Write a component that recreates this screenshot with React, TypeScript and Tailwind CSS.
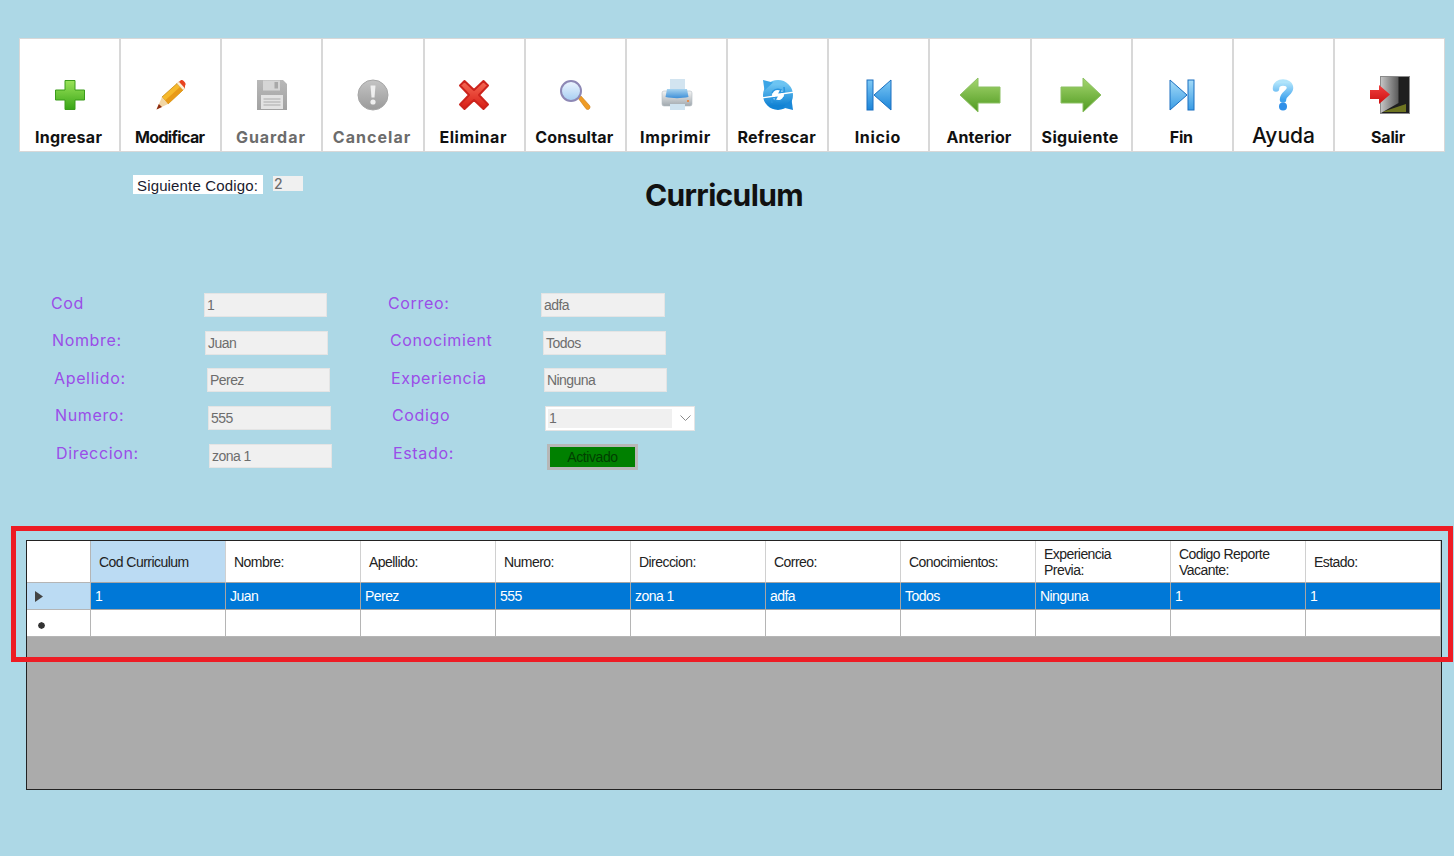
import type { ReactNode } from 'react';

const toolFont = "font-['Inter','Liberation_Sans',sans-serif]";

function Grad({ id, from, to }: { id: string; from: string; to: string }) {
  return (
    <linearGradient id={id} x1="0" y1="0" x2="0" y2="1">
      <stop offset="0" stopColor={from} />
      <stop offset="1" stopColor={to} />
    </linearGradient>
  );
}

const PlusIcon = () => (
  <svg width="32" height="32" viewBox="0 0 32 32">
    <defs><Grad id="gPlus" from="#9be35a" to="#38a516" /></defs>
    <path d="M11 1.500h10v9.500h9.500v10H21v9.500H11V21H1.500V11H11z" fill="url(#gPlus)" stroke="#3b9c1b" strokeWidth="1" strokeLinejoin="round" />
  </svg>
);

const PencilIcon = () => (
  <svg width="32" height="32" viewBox="0 0 32 32">
    <polygon points="7,18 22,4.500 28,11 13,25" fill="#f6b92c" stroke="#c98a12" strokeWidth="0.8" />
    <polygon points="10,21.500 25,8 28,11 13,25" fill="#e89a18" />
    <polygon points="7,18 13,25 1.500,30.500" fill="#f2d6a4" />
    <polygon points="1.500,30.500 3.800,25 7,28" fill="#8e2c10" />
    <polygon points="22,4.500 24,2.700 30,9.200 28,11" fill="#fff2d8" stroke="#d8b070" strokeWidth="0.5" />
    <path d="M24 2.700l1.500-1.200c1-.7 2.300-.5 3.200.5l1.300 1.500c.8 1 .8 2.300 0 3.200L30 9.200z" fill="#e8431f" />
  </svg>
);

const SaveIcon = () => (
  <svg width="32" height="32" viewBox="0 0 32 32">
    <defs><Grad id="gSave" from="#b8b8b8" to="#a2a2a2" /></defs>
    <path d="M1 1h26l4 4v26H1z" fill="url(#gSave)" />
    <rect x="7" y="1.500" width="17" height="10" fill="#d5d5d5" />
    <rect x="18.500" y="3" width="3.500" height="6.500" fill="#a8a8a8" />
    <rect x="5" y="16" width="22" height="14" fill="#e2e2e2" />
    <path d="M7.500 20h17M7.500 23h17M7.500 26h17" stroke="#aaa" strokeWidth="1.200" />
  </svg>
);

const CancelIcon = () => (
  <svg width="32" height="32" viewBox="0 0 32 32">
    <defs><Grad id="gCancel" from="#c4c4c4" to="#9a9a9a" /></defs>
    <circle cx="16" cy="16" r="15" fill="url(#gCancel)" stroke="#a6a6a6" strokeWidth="1" />
    <path d="M13.500 6.500h5l-1 12h-3z" fill="#efefef" />
    <circle cx="16" cy="23" r="2.600" fill="#efefef" />
  </svg>
);

const DeleteIcon = () => (
  <svg width="32" height="32" viewBox="0 0 32 32">
    <defs><Grad id="gDel" from="#f56a55" to="#d81c14" /></defs>
    <polygon points="2,6.500 6.500,2 16,11 25.500,2 30,6.500 21,16 30,25.500 25.500,30 16,21 6.500,30 2,25.500 11,16" fill="url(#gDel)" stroke="#cc231c" strokeWidth="2" strokeLinejoin="round" />
  </svg>
);

const SearchIcon = () => (
  <svg width="32" height="32" viewBox="0 0 32 32">
    <defs><Grad id="gLens" from="#eef6ff" to="#a5cdf2" /></defs>
    <path d="M19 19l3-2 8.500 9.500c.8 1 .7 2.500-.3 3.400-1 .9-2.400.8-3.200-.2z" fill="#ef9b25" stroke="#c97a14" strokeWidth="0.6" />
    <circle cx="12" cy="12" r="10" fill="url(#gLens)" stroke="#8d88b5" strokeWidth="2" />
  </svg>
);

const PrintIcon = () => (
  <svg width="32" height="32" viewBox="0 0 32 32">
    <defs>
      <Grad id="gPrint" from="#f4f4f4" to="#a0a8ae" />
      <Grad id="gTray" from="#a8d4f0" to="#3f90d8" />
    </defs>
    <rect x="9" y="0" width="15" height="12" fill="#d2e4f0" />
    <rect x="1" y="12" width="30" height="15" rx="2" fill="url(#gPrint)" stroke="#b4bcc2" strokeWidth="0.6" />
    <path d="M6 10h20l1.500 8c-7 1.500-16 1.500-23 0z" fill="url(#gTray)" />
    <circle cx="27" cy="22" r="1.100" fill="#f08030" />
    <rect x="9" y="25" width="15" height="6" fill="#cfe3f0" />
  </svg>
);

const RefreshIcon = () => (
  <svg width="32" height="32" viewBox="0 0 32 32">
    <defs><Grad id="gRef" from="#6cc4f2" to="#1283d4" /></defs>
    <circle cx="16" cy="16" r="10.500" fill="#fff" stroke="url(#gRef)" strokeWidth="9" />
    <path d="M1 1l10 2.500-8.500 8z" fill="#3ba5e6" />
    <path d="M31 31l-10-2.500 8.500-8z" fill="#1a88d8" />
    <path d="M10 14c1-3 5-5 9-3l-1.500 2.500 5-.5-.5-5" fill="none" stroke="#2a96e0" strokeWidth="1.500" />
    <path d="M22 18c-1 3-5 5-9 3l1.500-2.500-5 .5.500 5" fill="none" stroke="#2a96e0" strokeWidth="1.500" />
    <path d="M0 18.800l13-1.800M19 15l13-1.800" stroke="#fff" strokeWidth="1.300" />
  </svg>
);

const FirstIcon = () => (
  <svg width="26" height="32" viewBox="0 0 26 32">
    <defs><Grad id="gFirst" from="#7cc8f5" to="#1b84d8" /></defs>
    <rect x="1" y="1" width="6" height="30" fill="url(#gFirst)" stroke="#1a6fc0" strokeWidth="1" />
    <path d="M25 1v30L8 16z" fill="url(#gFirst)" stroke="#1a6fc0" strokeWidth="1" strokeLinejoin="round" />
  </svg>
);

const LastIcon = () => (
  <svg width="26" height="32" viewBox="0 0 26 32">
    <defs><Grad id="gLast" from="#a5dcf8" to="#3a9ce4" /></defs>
    <path d="M1 1v30l17-15z" fill="url(#gLast)" stroke="#1a6fc0" strokeWidth="1" strokeLinejoin="round" />
    <rect x="19" y="1" width="6" height="30" fill="url(#gLast)" stroke="#1a6fc0" strokeWidth="1" />
  </svg>
);

const BackIcon = () => (
  <svg width="42" height="36" viewBox="0 0 42 36">
    <defs><Grad id="gBack" from="#a5d66f" to="#4f9a20" /></defs>
    <path d="M1 18L19 1v9h22v16H19v9z" fill="url(#gBack)" stroke="#8cc063" strokeWidth="1" strokeLinejoin="round" />
  </svg>
);

const NextIcon = () => (
  <svg width="42" height="36" viewBox="0 0 42 36">
    <defs><Grad id="gNext" from="#a5d66f" to="#4f9a20" /></defs>
    <path d="M41 18L23 1v9H1v16h22v9z" fill="url(#gNext)" stroke="#8cc063" strokeWidth="1" strokeLinejoin="round" />
  </svg>
);

const HelpIcon = () => (
  <svg width="22" height="32" viewBox="0 0 22 32">
    <defs><Grad id="gHelp" from="#b0e4fb" to="#3ea2ee" /></defs>
    <path d="M4 9.500C4 5 7.500 3.500 11 3.500s7 2 7 5.500c0 5-7 5.500-7 11.500" fill="none" stroke="url(#gHelp)" strokeWidth="6.500" strokeLinecap="round" />
    <circle cx="11" cy="27.500" r="4" fill="#2f8fe8" />
  </svg>
);

const ExitIcon = () => (
  <svg width="40" height="38" viewBox="0 0 40 38">
    <defs>
      <linearGradient id="gDoor" x1="0" y1="0" x2="1" y2="0">
        <stop offset="0" stopColor="#c4c4c4" />
        <stop offset="1" stopColor="#5a5a5a" />
      </linearGradient>
      <Grad id="gArrow" from="#f04040" to="#cc1010" />
    </defs>
    <rect x="10.500" y="0.500" width="29" height="37" fill="#1e1e1e" stroke="#8a8a8a" strokeWidth="1" />
    <path d="M36 28v8H12z" fill="#6e7420" />
    <path d="M11 1h17.500v26L11 37z" fill="url(#gDoor)" />
    <path d="M0 14h9V9l11 9.500L9 28v-5H0z" fill="url(#gArrow)" />
  </svg>
);

type Tool = { label: string; icon: ReactNode; text: string };

const tools: Tool[] = [
  { label: 'Ingresar', icon: <PlusIcon />, text: 'tracking-[0.3px] text-[#111]' },
  { label: 'Modificar', icon: <PencilIcon />, text: 'tracking-[-0.65px] text-[#111]' },
  { label: 'Guardar', icon: <SaveIcon />, text: 'tracking-[0.95px] text-[#6c6c6c]' },
  { label: 'Cancelar', icon: <CancelIcon />, text: 'tracking-[1.05px] text-[#6c6c6c]' },
  { label: 'Eliminar', icon: <DeleteIcon />, text: 'tracking-[0.55px] text-[#111]' },
  { label: 'Consultar', icon: <SearchIcon />, text: 'tracking-[0.13px] text-[#111]' },
  { label: 'Imprimir', icon: <PrintIcon />, text: 'tracking-[0.68px] text-[#111]' },
  { label: 'Refrescar', icon: <RefreshIcon />, text: 'tracking-[0.25px] text-[#111]' },
  { label: 'Inicio', icon: <FirstIcon />, text: 'tracking-[0.63px] text-[#111]' },
  { label: 'Anterior', icon: <BackIcon />, text: 'tracking-[0.05px] text-[#111]' },
  { label: 'Siguiente', icon: <NextIcon />, text: 'tracking-[0.35px] text-[#111]' },
  { label: 'Fin', icon: <LastIcon />, text: 'tracking-[-0.2px] text-[#111]' },
];

function ToolButton({ label, icon, text }: Tool) {
  return (
    <button className="flex-1 min-w-0 h-full bg-white flex flex-col items-center pt-[36px]">
      <div className="h-[40px] flex items-center justify-center">{icon}</div>
      <div className={`mt-[10px] pr-[2px] h-[24px] leading-[24px] text-[16px] font-bold ${text}`}>{label}</div>
    </button>
  );
}

const boxText = "font-['Liberation_Sans',sans-serif] text-[14px] tracking-[-0.55px] text-[#6d6d6d]";

function Field({ value, width = 'w-[123px]' }: { value: string; width?: string }) {
  return (
    <div className={`${width} h-[24px] bg-[#f0f0f0] border border-[#e4e4e4] pl-[2px] leading-[23px] ${boxText}`}>{value}</div>
  );
}

function Label({ children, className }: { children: string; className: string }) {
  return <div className={`h-[24px] leading-[19px] text-[16px] tracking-[0.65px] text-[#9a4de8] ${className}`}>{children}</div>;
}

const columns = ['Cod Curriculum', 'Nombre:', 'Apellido:', 'Numero:', 'Direccion:', 'Correo:', 'Conocimientos:', 'Experiencia Previa:', 'Codigo Reporte Vacante:', 'Estado:'];
const values = ['1', 'Juan', 'Perez', '555', 'zona 1', 'adfa', 'Todos', 'Ninguna', '1', '1'];

const gridText = "font-['Liberation_Sans',sans-serif] text-[14px] tracking-[-0.55px]";

function DataGrid() {
  return (
    <div className="relative ml-[26px] mt-[70px] w-[1416px] h-[250px] border border-[#222] bg-[#ababab]">
      <div className={`grid grid-cols-[64px_repeat(10,135px)] grid-rows-[42px_27px_27px] ${gridText}`}>
        <div className="bg-white border-r border-b border-[#b5b5b5]" />
        {columns.map((c, i) => (
          <div
            key={c}
            className={`border-r border-b border-[#d0d0d0] border-b-[#a5a5a5] pl-[8px] pr-[20px] pt-px flex items-center leading-[16px] text-[#222] ${i === 0 ? 'bg-[#bbdbf3]' : 'bg-white'}`}
          >
            {c}
          </div>
        ))}
        <div className="bg-[#bbdbf3] border-r border-b border-[#b5b5b5] flex items-center pl-[8px]">
          <svg width="8" height="11" viewBox="0 0 8 11"><path d="M0 0l8 5.500L0 11z" fill="#444" /></svg>
        </div>
        {values.map((v, i) => (
          <div key={i} className="bg-[#0078d7] text-white border-r border-b border-[#a5a5a5] pl-[4px] leading-[26px]">{v}</div>
        ))}
        <div className="bg-white border-r border-b border-[#b5b5b5] flex items-center pl-[11px] pt-[4px]">
          <svg width="7" height="7" viewBox="0 0 8 8"><polygon points="4,0 7,1.500 8,4 7,6.500 4,8 1,6.500 0,4 1,1.500" fill="#333" /></svg>
        </div>
        {values.map((_, i) => (
          <div key={i} className="bg-white border-r border-b border-[#b5b5b5]" />
        ))}
      </div>
      {/* red highlight drawn over the screenshot */}
      <div className="absolute left-[-16px] top-[-15px] w-[1442px] h-[136px] border-[5px] border-[#ed1c24] pointer-events-none" />
    </div>
  );
}

export default function App() {
  return (
    <div className={`min-h-screen bg-[#add8e6] pt-[38px] overflow-hidden ${toolFont}`}>
      {/* toolbar */}
      <div className="ml-[19px] w-[1426px] h-[114px] bg-[#d8d8d8] p-px flex gap-[2px]">
        {tools.map((t) => (
          <ToolButton key={t.label} {...t} />
        ))}
        <button className="flex-1 min-w-0 h-full bg-white flex flex-col items-center pt-[36px]">
          <div className="h-[40px] flex items-center justify-center"><HelpIcon /></div>
          <div className="mt-[8px] h-[26px] leading-[26px] text-[21px] font-medium text-[#111]">Ayuda</div>
        </button>
        <button className="w-[109px] h-full bg-white flex flex-col items-center pt-[36px]">
          <div className="h-[40px] flex items-center justify-center"><ExitIcon /></div>
          <div className="mt-[10px] h-[24px] leading-[24px] text-[16px] font-bold tracking-[-0.2px] text-[#111] pr-[3px]">Salir</div>
        </button>
      </div>

      {/* next code + title */}
      <div className="mt-[23px] ml-[133px] flex items-start">
        <div className="w-[130px] h-[19px] bg-white pl-[4px] font-['Liberation_Sans',sans-serif] text-[15px] tracking-[0.15px] leading-[22px] text-[#1a1a2e] whitespace-nowrap">Siguiente Codigo:</div>
        <div className="ml-[10px] mt-px w-[30px] h-[15px] bg-[#f0f0f0] pl-[1px] text-[14px] leading-[15px] font-medium text-[#6d6d6d]">2</div>
        <h1 className="ml-[342px] h-[40px] leading-[40px] text-[30px] font-bold tracking-[-0.65px] text-[#111]">Curriculum</h1>
      </div>

      {/* form */}
      <div className="mt-[78px] flex flex-col gap-[13.5px]">
        <div className="flex pl-[51px]">
          <Label className="w-[153px] pt-px">Cod</Label>
          <Field value="1" />
          <Label className="ml-[61px] w-[153px] pt-px">Correo:</Label>
          <Field value="adfa" width="w-[124px]" />
        </div>
        <div className="flex pl-[52px]">
          <Label className="w-[153px]">Nombre:</Label>
          <Field value="Juan" />
          <Label className="ml-[62px] w-[153px] whitespace-nowrap">Conocimient</Label>
          <Field value="Todos" />
        </div>
        <div className="flex pl-[54px]">
          <Label className="w-[153px] pt-px">Apellido:</Label>
          <Field value="Perez" />
          <Label className="ml-[61px] w-[153px] pt-px">Experiencia</Label>
          <Field value="Ninguna" />
        </div>
        <div className="flex pl-[55px]">
          <Label className="w-[153px]">Numero:</Label>
          <Field value="555" />
          <Label className="ml-[61px] w-[153px]">Codigo</Label>
          <div className="w-[150px] h-[25px] bg-white border border-[#e4e4e4] p-[2px] flex items-center">
            <div className={`w-[124px] h-[19px] bg-[#f0f0f0] pl-px leading-[19px] ${boxText}`}>1</div>
            <svg className="ml-[8px]" width="11" height="6" viewBox="0 0 11 6"><path d="M0.500 0.500l5 5 5-5" fill="none" stroke="#8a8a8a" strokeWidth="1" /></svg>
          </div>
        </div>
        <div className="flex pl-[56px]">
          <Label className="w-[153px]">Direccion:</Label>
          <Field value="zona 1" />
          <Label className="ml-[61px] w-[154px]">Estado:</Label>
          <div className="w-[91px] h-[26px] bg-[#008000] border-[3px] border-[#b7b7b7] text-center leading-[20px] font-['Liberation_Sans',sans-serif] text-[14px] tracking-[-0.4px] text-[#003f00]">Activado</div>
        </div>
      </div>

      <DataGrid />
    </div>
  );
}
